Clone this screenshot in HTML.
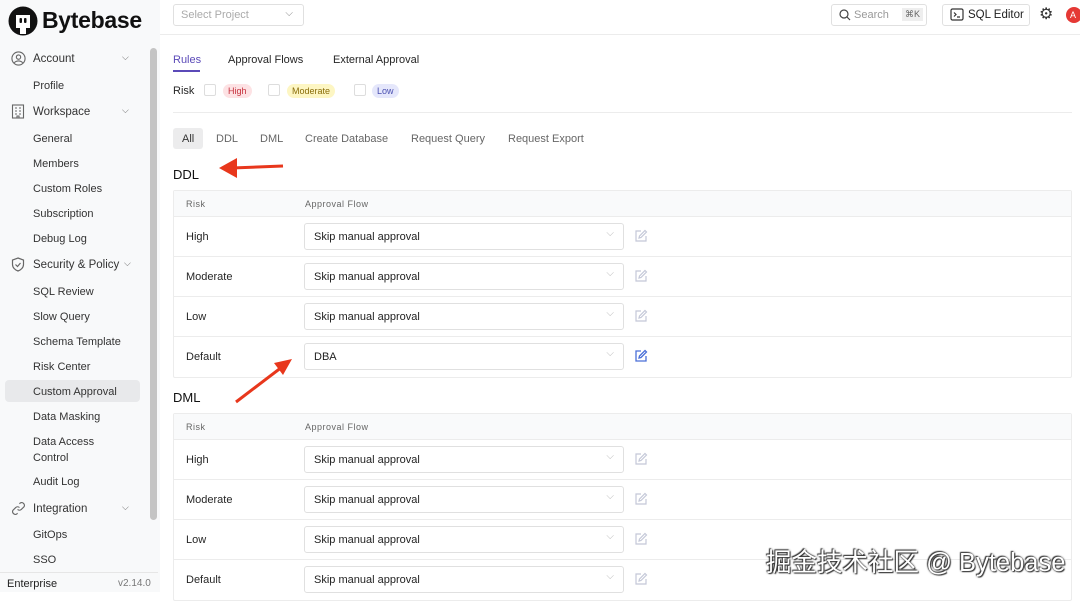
<!DOCTYPE html>
<html><head><meta charset="utf-8"><style>
*{box-sizing:border-box;margin:0;padding:0}
body{width:1080px;height:592px;overflow:hidden;background:#fff;font-family:"Liberation Sans",sans-serif;color:#262626;position:relative;font-size:11px}
.a{position:absolute;white-space:nowrap}
#sb{position:absolute;left:0;top:0;width:160px;height:592px;background:#f8f9fa}
.si{position:absolute;left:33px;font-size:11px;color:#333;margin-top:1px}
.sh{position:absolute;left:33px;font-size:11.5px;color:#333;font-weight:500;margin-top:1px}
.chev{position:absolute;left:122px;font-size:9px;color:#666}
.tb{position:absolute;left:173px;width:899px;border:1px solid #ececec;border-radius:2px}
.th{height:26px;background:#f9fafb;border-bottom:1px solid #ececec;position:relative;font-size:9px;color:#666;letter-spacing:.5px}
.tr{height:40px;border-bottom:1px solid #ececec;position:relative}
.tr:last-child{border-bottom:none}
.sel{position:absolute;left:130px;top:6px;width:320px;height:27px;border:1px solid #e0e0e0;border-radius:3px;padding:7px 9px;font-size:11px;color:#222}
.sel:after{content:"⌵";position:absolute;right:9px;top:4px;color:#bbb;font-size:10px}
.ed{position:absolute;left:460px;top:12px}
</style></head><body>
<div id="sb"></div>
<div class="a" style="left:150px;top:48px;width:7px;height:472px;background:#c4c4c4;border-radius:4px"></div>
<svg class="a" style="left:8px;top:6px" width="30" height="30" viewBox="0 0 30 30"><circle cx="15" cy="15" r="14.5" fill="#111"/><path d="M8 9h14v13h-4v6h-6v-6H8z" fill="#fff" rx="2"/><rect x="11.5" y="12" width="2.5" height="5" rx="1" fill="#111"/><rect x="16" y="12" width="2.5" height="5" rx="1" fill="#111"/></svg>
<div class="a" style="left:42px;top:7px;font-size:23px;font-weight:bold;color:#111;letter-spacing:-.3px">Bytebase</div>
<svg class="a" style="left:11px;top:51px" width="15" height="15" viewBox="0 0 16 16" fill="none" stroke="#666" stroke-width="1.2"><circle cx="8" cy="8" r="7"/><circle cx="8" cy="6.5" r="2.3"/><path d="M3.5 12.5c2.5-2.5 6.5-2.5 9 0"/></svg>
<div class="sh" style="top:52px">Account</div><div class="chev" style="top:52px">⌵</div>
<div class="si" style="top:79px">Profile</div>
<svg class="a" style="left:11px;top:104px" width="14" height="15" viewBox="0 0 14 15" fill="none" stroke="#666" stroke-width="1.1"><rect x="1.5" y="1" width="11" height="13"/><path d="M4 4h2M8 4h2M4 7h2M8 7h2M4 10h2M8 10h2M6 14v-2h2v2"/></svg>
<div class="sh" style="top:105px">Workspace</div><div class="chev" style="top:105px">⌵</div>
<div class="si" style="top:132px">General</div>
<div class="si" style="top:157px">Members</div>
<div class="si" style="top:182px">Custom Roles</div>
<div class="si" style="top:207px">Subscription</div>
<div class="si" style="top:232px">Debug Log</div>
<svg class="a" style="left:11px;top:257px" width="14" height="15" viewBox="0 0 14 15" fill="none" stroke="#666" stroke-width="1.2"><path d="M7 1l5.5 2v4.5c0 3-2.5 5.5-5.5 6.5C4 13 1.5 10.5 1.5 7.5V3z"/><path d="M4.5 7.5l2 2 3-3.5"/></svg>
<div class="sh" style="top:258px">Security &amp; Policy</div><div class="chev" style="top:258px;left:124px">⌵</div>
<div class="si" style="top:285px">SQL Review</div>
<div class="si" style="top:310px">Slow Query</div>
<div class="si" style="top:335px">Schema Template</div>
<div class="si" style="top:360px">Risk Center</div>
<div class="a" style="left:5px;top:380px;width:135px;height:22px;background:#e8e9eb;border-radius:4px"></div>
<div class="si" style="top:385px">Custom Approval</div>
<div class="si" style="top:410px">Data Masking</div>
<div class="si" style="top:435px">Data Access</div>
<div class="si" style="top:451px">Control</div>
<div class="si" style="top:475px">Audit Log</div>
<svg class="a" style="left:11px;top:501px" width="15" height="15" viewBox="0 0 16 16" fill="none" stroke="#666" stroke-width="1.2"><path d="M7 9a3 3 0 0 0 4 0l3-3a3 3 0 0 0-4-4l-1 1M9 7a3 3 0 0 0-4 0l-3 3a3 3 0 0 0 4 4l1-1"/></svg>
<div class="sh" style="top:502px">Integration</div><div class="chev" style="top:502px">⌵</div>
<div class="si" style="top:528px">GitOps</div>
<div class="si" style="top:553px">SSO</div>
<div class="a" style="left:0;top:572px;width:158px;height:1px;background:#e6e6e6"></div>
<div class="a" style="left:7px;top:578px;font-size:11px;color:#222">Enterprise</div>
<div class="a" style="left:118px;top:578px;font-size:10px;color:#777">v2.14.0</div>

<div class="a" style="left:160px;top:34px;width:920px;height:1px;background:#ececec"></div>
<div class="a" style="left:173px;top:4px;width:131px;height:22px;border:1px solid #e0e0e0;border-radius:3px;padding:4px 7px;color:#aaa;font-size:11px">Select Project<span style="position:absolute;right:10px;top:3px;font-size:10px;color:#888">⌵</span></div>
<div class="a" style="left:831px;top:4px;width:96px;height:22px;border:1px solid #e0e0e0;border-radius:3px"></div>
<svg class="a" style="left:839px;top:9px" width="12" height="12" viewBox="0 0 12 12" fill="none" stroke="#444" stroke-width="1.2"><circle cx="5" cy="5" r="4"/><path d="M8 8l3 3"/></svg>
<div class="a" style="left:854px;top:9px;color:#999;font-size:11px">Search</div>
<div class="a" style="left:902px;top:8px;background:#eee;color:#666;font-size:9px;padding:1px 3px">⌘K</div>
<div class="a" style="left:942px;top:4px;width:88px;height:22px;border:1px solid #e0e0e0;border-radius:3px"></div>
<svg class="a" style="left:950px;top:8px" width="14" height="13" viewBox="0 0 14 13" fill="none" stroke="#333" stroke-width="1.2"><rect x="1" y="1" width="12" height="11" rx="1.5"/><path d="M4 4.5l2 2-2 2M7 9h3"/></svg>
<div class="a" style="left:968px;top:9px;font-size:11.5px;color:#222">SQL Editor</div>
<div class="a" style="left:1039px;top:4px;font-size:16px;color:#333">⚙</div>
<div class="a" style="left:1066px;top:7px;width:16px;height:16px;border-radius:50%;background:#e53935;color:#fff;font-size:9px;padding:3px 0 0 4px">A</div>

<div class="a" style="left:173px;top:54px;color:#5b4ab8;font-size:11px">Rules</div>
<div class="a" style="left:173px;top:70px;width:27px;height:2px;background:#5b4ab8"></div>
<div class="a" style="left:228px;top:54px;font-size:11px">Approval Flows</div>
<div class="a" style="left:333px;top:54px;font-size:11px">External Approval</div>
<div class="a" style="left:173px;top:85px;font-size:11px">Risk</div>
<div class="a" style="left:204px;top:84px;width:12px;height:12px;border:1px solid #ddd;border-radius:2px"></div>
<div class="a" style="left:223px;top:84px;background:#fde2e4;color:#c5303c;font-size:9px;padding:2px 5px;border-radius:8px">High</div>
<div class="a" style="left:268px;top:84px;width:12px;height:12px;border:1px solid #ddd;border-radius:2px"></div>
<div class="a" style="left:287px;top:84px;background:#fdf6c3;color:#8a6d0a;font-size:9px;padding:2px 5px;border-radius:8px">Moderate</div>
<div class="a" style="left:354px;top:84px;width:12px;height:12px;border:1px solid #ddd;border-radius:2px"></div>
<div class="a" style="left:372px;top:84px;background:#e5e7fb;color:#4a4fb0;font-size:9px;padding:2px 5px;border-radius:8px">Low</div>
<div class="a" style="left:173px;top:112px;width:899px;height:1px;background:#ececec"></div>
<div class="a" style="left:173px;top:128px;width:30px;height:21px;background:#ececed;border-radius:3px"></div>
<div class="a" style="left:182px;top:133px;font-size:11px;color:#333">All</div>
<div class="a" style="left:216px;top:133px;font-size:11px;color:#666">DDL</div>
<div class="a" style="left:260px;top:133px;font-size:11px;color:#666">DML</div>
<div class="a" style="left:305px;top:133px;font-size:11px;color:#666">Create Database</div>
<div class="a" style="left:411px;top:133px;font-size:11px;color:#666">Request Query</div>
<div class="a" style="left:508px;top:133px;font-size:11px;color:#666">Request Export</div>

<div class="a" style="left:173px;top:167px;font-size:13px;font-weight:500;color:#111">DDL</div>
<div class="tb" style="top:190px">
<div class="th"><span class="a" style="left:12px;top:8px">Risk</span><span class="a" style="left:131px;top:8px">Approval Flow</span></div>
<div class="tr"><span class="a" style="left:12px;top:14px">High</span><div class="sel">Skip manual approval</div><svg class="ed" width="14" height="14" viewBox="0 0 14 14" fill="none" stroke="#c4c8d8" stroke-width="1.2"><path d="M7 2H2v10h10V7"/><path d="M11 1.5l1.5 1.5L7 8.5 5 9l.5-2z"/></svg></div>
<div class="tr"><span class="a" style="left:12px;top:14px">Moderate</span><div class="sel">Skip manual approval</div><svg class="ed" width="14" height="14" viewBox="0 0 14 14" fill="none" stroke="#c4c8d8" stroke-width="1.2"><path d="M7 2H2v10h10V7"/><path d="M11 1.5l1.5 1.5L7 8.5 5 9l.5-2z"/></svg></div>
<div class="tr"><span class="a" style="left:12px;top:14px">Low</span><div class="sel">Skip manual approval</div><svg class="ed" width="14" height="14" viewBox="0 0 14 14" fill="none" stroke="#c4c8d8" stroke-width="1.2"><path d="M7 2H2v10h10V7"/><path d="M11 1.5l1.5 1.5L7 8.5 5 9l.5-2z"/></svg></div>
<div class="tr"><span class="a" style="left:12px;top:14px">Default</span><div class="sel">DBA</div><svg class="ed" width="14" height="14" viewBox="0 0 14 14" fill="none" stroke="#4a6fd8" stroke-width="1.3"><path d="M7 2H2v10h10V7"/><path d="M11 1.5l1.5 1.5L7 8.5 5 9l.5-2z"/></svg></div>
</div>

<div class="a" style="left:173px;top:390px;font-size:13px;font-weight:500;color:#111">DML</div>
<div class="tb" style="top:413px">
<div class="th"><span class="a" style="left:12px;top:8px">Risk</span><span class="a" style="left:131px;top:8px">Approval Flow</span></div>
<div class="tr"><span class="a" style="left:12px;top:14px">High</span><div class="sel">Skip manual approval</div><svg class="ed" width="14" height="14" viewBox="0 0 14 14" fill="none" stroke="#c4c8d8" stroke-width="1.2"><path d="M7 2H2v10h10V7"/><path d="M11 1.5l1.5 1.5L7 8.5 5 9l.5-2z"/></svg></div>
<div class="tr"><span class="a" style="left:12px;top:14px">Moderate</span><div class="sel">Skip manual approval</div><svg class="ed" width="14" height="14" viewBox="0 0 14 14" fill="none" stroke="#c4c8d8" stroke-width="1.2"><path d="M7 2H2v10h10V7"/><path d="M11 1.5l1.5 1.5L7 8.5 5 9l.5-2z"/></svg></div>
<div class="tr"><span class="a" style="left:12px;top:14px">Low</span><div class="sel">Skip manual approval</div><svg class="ed" width="14" height="14" viewBox="0 0 14 14" fill="none" stroke="#c4c8d8" stroke-width="1.2"><path d="M7 2H2v10h10V7"/><path d="M11 1.5l1.5 1.5L7 8.5 5 9l.5-2z"/></svg></div>
<div class="tr"><span class="a" style="left:12px;top:14px">Default</span><div class="sel">Skip manual approval</div><svg class="ed" width="14" height="14" viewBox="0 0 14 14" fill="none" stroke="#c4c8d8" stroke-width="1.2"><path d="M7 2H2v10h10V7"/><path d="M11 1.5l1.5 1.5L7 8.5 5 9l.5-2z"/></svg></div>
</div>

<svg class="a" style="left:0;top:0" width="1080" height="592" viewBox="0 0 1080 592">
<path d="M283 166L232 168" stroke="#e8371c" stroke-width="3" fill="none"/><path d="M219 168l18-10v20z" fill="#e8371c"/>
<path d="M236 402L282 367" stroke="#e8371c" stroke-width="3" fill="none"/><path d="M292 359l-18 4 9 12z" fill="#e8371c"/>
</svg>
<div class="a" style="left:766px;top:542px;font-size:25.5px;color:#fff;font-family:'Liberation Sans','Noto Sans CJK SC',sans-serif;text-shadow:0 0 2px #333,1px 1px 1px #333,-1px -1px 1px #333">掘金技术社区 @ Bytebase</div>
</body></html>
